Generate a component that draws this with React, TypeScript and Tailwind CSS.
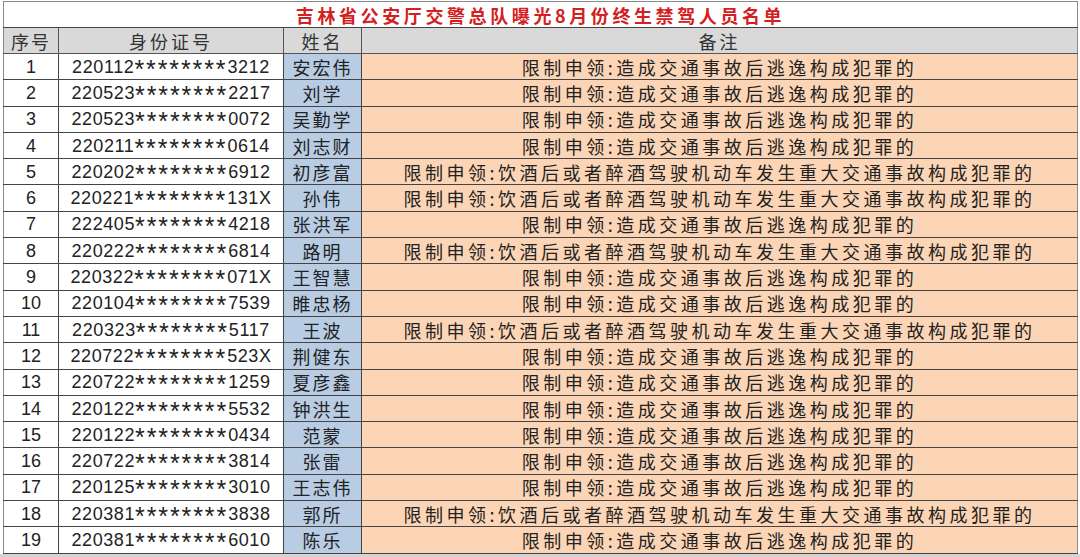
const SHORT = '限制申领:造成交通事故后逃逸构成犯罪的';
const LONG = '限制申领:饮酒后或者醉酒驾驶机动车发生重大交通事故构成犯罪的';

const rows: [string, string, string, boolean][] = [
  ['220112', '3212', '安宏伟', false],
  ['220523', '2217', '刘学', false],
  ['220523', '0072', '吴勤学', false],
  ['220211', '0614', '刘志财', false],
  ['220202', '6912', '初彦富', true],
  ['220221', '131X', '孙伟', true],
  ['222405', '4218', '张洪军', false],
  ['220222', '6814', '路明', true],
  ['220322', '071X', '王智慧', false],
  ['220104', '7539', '睢忠杨', false],
  ['220323', '5117', '王波', true],
  ['220722', '523X', '荆健东', false],
  ['220722', '1259', '夏彦鑫', false],
  ['220122', '5532', '钟洪生', false],
  ['220122', '0434', '范蒙', false],
  ['220722', '3814', '张雷', false],
  ['220125', '3010', '王志伟', false],
  ['220381', '3838', '郭所', true],
  ['220381', '6010', '陈乐', false],
];

const cjk = "font-['Noto_Sans_CJK_SC',sans-serif]";
const num = "font-['Liberation_Sans',sans-serif]";

export default function App() {
  return (
    <div className="w-[1080px] h-[557px] bg-white overflow-hidden">
      <div className="pt-[1px] pl-[3px] pr-[2px]">
        <table className="w-[1075px] table-fixed border-collapse border border-[#8a8a8a]">
          <colgroup>
            <col className="w-[55px]" />
            <col className="w-[225px]" />
            <col className="w-[78px]" />
            <col />
          </colgroup>
          <tbody>
            <tr className="h-[26px]">
              <td
                colSpan={4}
                className={`${cjk} text-center text-[18px] font-bold leading-none tracking-[3.6px] text-[#d42020] border-b border-[#444] bg-white`}
              >
                吉林省公安厅交警总队曝光8月份终生禁驾人员名单
              </td>
            </tr>
            <tr className={`h-[26px] bg-[#d9d9d9] ${cjk} text-[18px] text-[#333] leading-none`}>
              <td className="text-center tracking-[2px] border-r border-b border-[#555]">序号</td>
              <td className="text-center tracking-[3px] border-r border-b border-[#555]">身份证号</td>
              <td className="text-center tracking-[3px] border-r border-b border-[#555]">姓名</td>
              <td className="text-center tracking-[3px] border-b border-[#555]">备注</td>
            </tr>
            {rows.map(([pre, post, name, long], i) => (
              <tr key={i} className="h-[26.3px] text-[#222] leading-none">
                <td className={`${num} text-[18px] text-center border-r border-b border-[#444] bg-white`}>{i + 1}</td>
                <td className={`${num} text-[18px] text-center border-r border-b border-[#444] bg-white tracking-[0.6px]`}>
                  {pre}
                  <span className="relative top-[5px] text-[25px] leading-[0] tracking-[1.9px]">********</span>
                  {post}
                </td>
                <td className={`${cjk} text-[18px] text-center tracking-[2px] border-r border-b border-[#444] bg-[#b8cce4]`}>
                  {name}
                </td>
                <td className={`${cjk} text-[18px] text-center tracking-[3.5px] border-b border-[#444] bg-[#fbd5b5]`}>
                  {long ? LONG : SHORT}
                </td>
              </tr>
            ))}
          </tbody>
        </table>
      </div>
      <div className="h-[10px] bg-[#d4d4d4]" />
    </div>
  );
}
